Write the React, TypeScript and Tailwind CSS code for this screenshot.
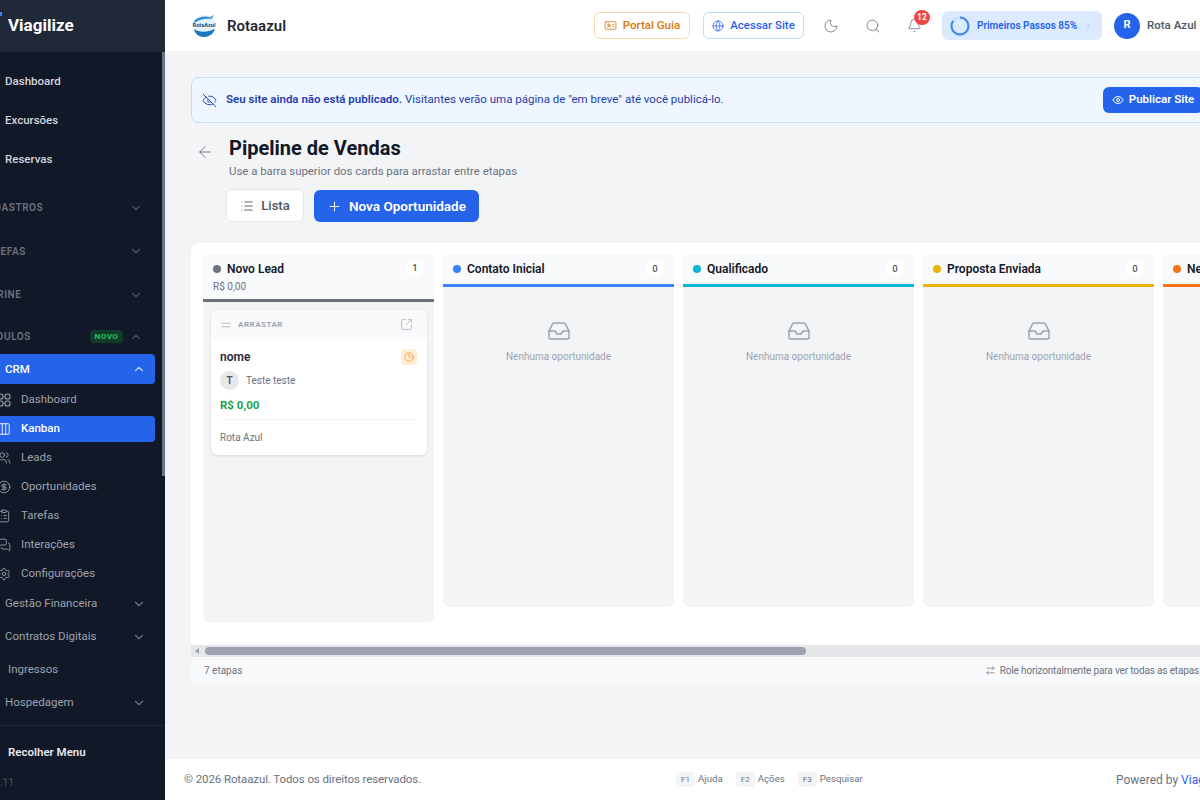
import {
  ArrowLeft,
  ArrowRightLeft,
  Bell,
  ChevronDown,
  ChevronRight,
  ChevronUp,
  Clock,
  Columns3,
  IdCard,
  EyeOff,
  Eye,
  Globe,
  Inbox,
  List,
  MessagesSquare,
  Moon,
  Plus,
  Search,
  Settings,
  SquareArrowOutUpRight,
  CircleDollarSign,
  ClipboardList,
  Users,
  Equal,
} from 'lucide-react';

const font = { fontFamily: 'Roboto, "Noto Sans", sans-serif' };

function GridIcon({ size = 14 }: { size?: number }) {
  return (
    <svg width={size} height={size} viewBox="0 0 14 14" fill="none" stroke="currentColor" strokeWidth="1.1">
      <rect x="1" y="1" width="5" height="5" rx="2" />
      <rect x="8" y="1" width="5" height="5" rx="2" />
      <rect x="1" y="8" width="5" height="5" rx="2" />
      <rect x="8" y="8" width="5" height="5" rx="2" />
    </svg>
  );
}

function TopItem({ label }: { label: string }) {
  return (
    <div className="h-[39px] pt-[1px] flex items-center pl-[40px] text-[11.5px] font-medium text-[#d1d5db]">
      {label}
    </div>
  );
}

function SectionTitle({ label, open, badge, h }: { label: string; open?: boolean; badge?: boolean; h: string }) {
  return (
    <div className={`${h} flex items-center pl-[15px] pr-[22px] text-[10px] font-semibold tracking-[0.6px] text-[#6b7280]`}>
      <span className="flex-1">{label}</span>
      {badge && (
        <span className="mr-[6px] w-[33px] h-[13px] flex items-center justify-center rounded bg-[#14532d]/60 text-[#22c55e] text-[8px] font-bold tracking-[0.5px]">NOVO</span>
      )}
      <span className="text-[#4b5563]">{open ? <ChevronUp size={14} /> : <ChevronDown size={14} />}</span>
    </div>
  );
}

function SubItem({ label, icon: Icon, active }: { label: string; icon: React.ComponentType<{ size?: number; strokeWidth?: number }>; active?: boolean }) {
  return (
    <div className={`h-[29px] flex items-center ${active ? 'text-white' : 'text-[#9ca3af]'} text-[11.5px]`}>
      <div className={`flex items-center w-[190px] h-[26px] rounded pl-[32px] ${active ? 'bg-[#2563eb] font-medium' : ''}`}>
        <Icon size={14} strokeWidth={1.5} />
        <span className="ml-[10px] mt-[1px]">{label}</span>
      </div>
    </div>
  );
}

function GroupItem({ label, chevron = true, indent }: { label: string; chevron?: boolean; indent?: boolean }) {
  return (
    <div className={`h-[33px] flex items-center pr-[19px] text-[11.5px] text-[#9ca3af] ${indent ? 'pl-[43px]' : 'pl-[40px]'}`}>
      <span className="flex-1 mt-[1px]">{label}</span>
      {chevron && <ChevronDown size={14} className="text-[#6b7280]" />}
    </div>
  );
}

function Sidebar() {
  return (
    <aside className="w-[165px] shrink-0 h-full overflow-hidden bg-[#111827] flex flex-col">
      <div className="h-[52px] shrink-0 bg-[#1f2937] flex items-center relative">
        <div className="absolute left-0 top-[12px] w-[2px] h-[4px] bg-[#3b82f6]" />
        <span className="pl-[8px] text-[17px] font-bold text-white">Viagilize</span>
      </div>
      <div className="h-[673px] shrink-0 relative overflow-hidden ml-[-35px] w-[200px]">
        <div className="pt-[10px]">
          <TopItem label="Dashboard" />
          <TopItem label="Excursões" />
          <TopItem label="Reservas" />
          <div className="h-[6px]" />
          <SectionTitle label="CADASTROS" h="h-[43px] pt-[2px]" />
          <SectionTitle label="TAREFAS" h="h-[44px] pt-[2px]" />
          <SectionTitle label="VITRINE" h="h-[43px] pt-[2px]" />
          <SectionTitle label="MÓDULOS" h="h-[39px] pt-[4px]" open badge />
          <div className="h-[30px] w-[190px] rounded bg-[#2563eb] flex items-center pl-[40px] pr-[9px] text-[11.5px] font-medium text-white">
            <span className="flex-1 mt-[1px]">CRM</span>
            <ChevronUp size={14} className="text-white/70" />
          </div>
          <div className="mt-[1px]">
            <SubItem label="Dashboard" icon={GridIcon} />
            <SubItem label="Kanban" icon={Columns3} active />
            <SubItem label="Leads" icon={Users} />
            <SubItem label="Oportunidades" icon={CircleDollarSign} />
            <SubItem label="Tarefas" icon={ClipboardList} />
            <SubItem label="Interações" icon={MessagesSquare} />
            <SubItem label="Configurações" icon={Settings} />
          </div>
          <div className="mt-[-1px]">
            <GroupItem label="Gestão Financeira" />
            <GroupItem label="Contratos Digitais" />
            <GroupItem label="Ingressos" chevron={false} indent />
            <GroupItem label="Hospedagem" />
          </div>
        </div>
        <div className="absolute right-0 top-0 w-[3px] h-[424px] bg-[#6b7280]" />
      </div>
      <div className="flex-1 border-t border-[#1f2937]">
        <div className="h-[54px] flex items-center pl-[8px] text-[11.5px] font-semibold text-[#e5e7eb]">Recolher Menu</div>
        <div className="mt-[-5px] text-[10px] text-[#4b5563]">.11</div>
      </div>
    </aside>
  );
}

function Logo() {
  return (
    <svg width="24" height="24" viewBox="0 0 24 24" className="shrink-0">
      <circle cx="12" cy="12" r="11" fill="#e3f2fd" />
      <path d="M2 7 C7 2 16 1 21 5 C15 4 7 5 2 9 Z" fill="#2d8fd5" />
      <path d="M2 15 C8 19 16 18 23 15 C21 21 16 23 12 23 C7 23 3 20 2 15 Z" fill="#1c78c0" />
      <path d="M18 3 l4 -2 -2 3z" fill="#2d8fd5" />
      <text x="12" y="13" textAnchor="middle" fontSize="5.6" fontWeight="700" fill="#14507f" fontFamily="Roboto, sans-serif">RotaAzul</text>
    </svg>
  );
}

function ProgressRing() {
  return (
    <svg width="20" height="20" viewBox="0 0 20 20" className="shrink-0 -rotate-90">
      <circle cx="10" cy="10" r="8.5" fill="none" stroke="#bfdbfe" strokeWidth="2" />
      <circle cx="10" cy="10" r="8.5" fill="none" stroke="#3b82f6" strokeWidth="2" strokeDasharray="45.4 53.4" />
    </svg>
  );
}

function Header() {
  return (
    <header className="h-[52px] shrink-0 bg-white border-b border-gray-100 flex items-center pl-[27px]">
      <Logo />
      <span className="ml-[11px] mt-[1px] text-[15px] font-semibold text-[#1f2937]">Rotaazul</span>
      <div className="ml-auto flex items-center">
        <button className="w-[96px] h-[27px] flex items-center justify-center gap-[6px] rounded-md border border-[#fed7aa] text-[11.5px] font-medium text-[#d97706]">
          <IdCard size={13} strokeWidth={1.5} />Portal Guia
        </button>
        <button className="ml-[13px] w-[101px] h-[27px] flex items-center justify-center gap-[6px] rounded-md border border-[#bfdbfe] text-[11.5px] font-medium text-[#2563eb]">
          <Globe size={12} strokeWidth={1.5} />Acessar Site
        </button>
        <Moon size={16} strokeWidth={1.25} className="ml-[19px] text-[#6b7280]" />
        <Search size={16} strokeWidth={1.25} className="ml-[26px] text-[#6b7280]" />
        <div className="ml-[26px] relative">
          <Bell size={15} strokeWidth={1.25} className="text-[#6b7280]" />
          <span className="absolute left-[7px] top-[-8px] w-[16px] h-[15px] rounded-full bg-[#ef4444] text-white text-[8.5px] font-bold flex items-center justify-center">12</span>
        </div>
        <div className="ml-[20px] w-[160px] h-[29px] rounded-md bg-[#dbeafe] flex items-center pl-[8px] text-[10px] font-semibold text-[#2563eb]">
          <ProgressRing />
          <span className="ml-[7px]">Primeiros Passos 85%</span>
          <ChevronRight size={10} className="ml-[6px] text-[#93c5fd]" />
        </div>
        <div className="ml-[12px] w-[26px] h-[26px] rounded-full bg-[#2563eb] text-white text-[11px] font-bold flex items-center justify-center">R</div>
        <span className="ml-[7px] text-[11.5px] font-medium text-[#4b5563] w-[88px]">Rota Azul</span>
      </div>
    </header>
  );
}

const stages = [
  { name: 'Contato Inicial', dot: 'bg-[#3b82f6]', line: 'border-[#3b82f6]' },
  { name: 'Qualificado', dot: 'bg-[#06b6d4]', line: 'border-[#06b6d4]' },
  { name: 'Proposta Enviada', dot: 'bg-[#eab308]', line: 'border-[#eab308]' },
  { name: 'Negociação', dot: 'bg-[#f97316]', line: 'border-[#f97316]' },
];

function CountPill({ n }: { n: number }) {
  return (
    <span className="w-[18px] h-[14px] rounded-full bg-white text-[9.5px] font-medium text-[#4b5563] flex items-center justify-center">{n}</span>
  );
}

function EmptyColumn({ name, dot, line }: { name: string; dot: string; line: string }) {
  return (
    <div className="w-[231px] shrink-0 h-[353px] rounded-md bg-[#f3f4f6] overflow-hidden">
      <div className={`h-[33px] bg-[#f9fafb] border-b-[3px] ${line} flex items-center pl-[10px] pr-[10px]`}>
        <span className={`w-[8px] h-[8px] rounded-full ${dot}`} />
        <span className="ml-[6px] flex-1 text-[12px] font-semibold text-[#111827]">{name}</span>
        <CountPill n={0} />
      </div>
      <div className="flex flex-col items-center pt-[32px] text-[#9ca3af]">
        <Inbox size={24} strokeWidth={1.5} />
        <span className="mt-[6px] text-[10px]">Nenhuma oportunidade</span>
      </div>
    </div>
  );
}

function LeadColumn() {
  return (
    <div className="w-[231px] shrink-0 h-[368px] rounded-md bg-[#f3f4f6] overflow-hidden">
      <div className="h-[48px] bg-[#f9fafb] border-b-[3px] border-[#6b7280] pl-[10px] pr-[10px] pt-[6px]">
        <div className="flex items-center h-[17px]">
          <span className="w-[8px] h-[8px] rounded-full bg-[#6b7280]" />
          <span className="ml-[6px] flex-1 text-[12px] font-semibold text-[#111827]">Novo Lead</span>
          <CountPill n={1} />
        </div>
        <div className="text-[10px] text-[#6b7280] mt-[2px]">R$ 0,00</div>
      </div>
      <div className="ml-[8px] mr-[7px] mt-[8px] h-[145px] rounded-md bg-white shadow-sm overflow-hidden">
        <div className="h-[29px] bg-[#f9fafb] flex items-center pl-[8px] pr-[14px] text-[#9ca3af]">
          <Equal size={14} strokeWidth={1.25} />
          <span className="ml-[5px] flex-1 text-[8px] font-bold tracking-[0.5px]">ARRASTAR</span>
          <SquareArrowOutUpRight size={13} strokeWidth={1.25} />
        </div>
        <div className="pl-[9px] pr-[10px]">
          <div className="flex items-center justify-between mt-[9px]">
            <span className="text-[12px] font-semibold text-[#1f2937]">nome</span>
            <span className="w-[16px] h-[16px] rounded bg-[#ffedd5] flex items-center justify-center text-[#fb923c]">
              <Clock size={10} />
            </span>
          </div>
          <div className="flex items-center mt-[5px]">
            <span className="w-[19px] h-[19px] rounded-full bg-[#e5e7eb] text-[10px] font-semibold text-[#4b5563] flex items-center justify-center">T</span>
            <span className="ml-[7px] text-[10px] text-[#6b7280]">Teste teste</span>
          </div>
          <div className="mt-[7px] text-[11.5px] font-bold text-[#16a34a]">R$ 0,00</div>
          <div className="mt-[5px] border-t border-[#f3f4f6] pt-[10px] text-[10px] text-[#6b7280]">Rota Azul</div>
        </div>
      </div>
    </div>
  );
}

function Key({ k, label }: { k: string; label: string }) {
  return (
    <span className="flex items-center gap-[3px]">
      <kbd className="w-[19px] h-[15px] rounded-sm bg-[#f3f4f6] text-[8px] text-[#6b7280] flex items-center justify-center" style={font}>{k}</kbd>
      <span className="text-[9.7px] text-[#6b7280]">{label}</span>
    </span>
  );
}

export default function App() {
  return (
    <div className="w-[1200px] h-[800px] overflow-hidden flex bg-[#f3f4f6]" style={font}>
      <Sidebar />
      <main className="w-[1035px] h-full flex flex-col shrink-0 overflow-hidden">
        <div className="w-[1070px] h-full flex flex-col">
          <Header />
          <div className="flex-1 pl-[26px] pt-[25px]">
            <div className="h-[46px] rounded-lg bg-[#eff6ff] border border-[#bfdbfe] flex items-center pl-[10px] pr-[31px]">
              <EyeOff size={15} strokeWidth={1.5} className="text-[#1e40af]" />
              <p className="ml-[9px] flex-1 text-[11.5px] text-[#1e40af]">
                <span className="font-semibold">Seu site ainda não está publicado.</span> Visitantes verão uma página de "em breve" até você publicá-lo.
              </p>
              <button className="w-[100px] h-[26px] rounded-md bg-[#2563eb] text-white text-[11.5px] font-semibold flex items-center justify-center gap-[5px]">
                <Eye size={12} />Publicar Site
              </button>
            </div>
            <div className="flex mt-[13px]">
              <ArrowLeft size={18} strokeWidth={1.25} className="ml-[5px] mt-[7px] text-[#6b7280]" />
              <div className="ml-[15px]">
                <h1 className="text-[20px] leading-[24px] font-bold text-[#111827]">Pipeline de Vendas</h1>
                <p className="text-[11.4px] leading-[16px] mt-[3px] text-[#6b7280]">Use a barra superior dos cards para arrastar entre etapas</p>
                <div className="flex items-end mt-[10px] ml-[-3px] gap-[10px]">
                  <button className="w-[78px] h-[33px] rounded-md bg-white border border-[#e5e7eb] flex items-center justify-center gap-[7px] text-[13px] font-medium text-[#4b5563]">
                    <List size={14} strokeWidth={1.5} />Lista
                  </button>
                  <button className="w-[165px] h-[32px] rounded-md bg-[#2563eb] flex items-center justify-center gap-[7px] text-[13.5px] font-semibold text-white">
                    <Plus size={15} strokeWidth={1.5} />Nova Oportunidade
                  </button>
                </div>
              </div>
            </div>
            <section className="mt-[21px] h-[440px] rounded-lg bg-white overflow-hidden flex flex-col">
              <div className="h-[402px] flex gap-[9px] pl-[12px] pt-[11px]">
                <LeadColumn />
                {stages.map((s) => (
                  <EmptyColumn key={s.name} {...s} />
                ))}
              </div>
              <div className="h-[12px] bg-[#e5e7eb] flex items-center">
                <span className="ml-[4px] w-0 h-0 border-y-[3px] border-y-transparent border-r-[4px] border-r-[#9ca3af]" />
                <div className="ml-[6px] w-[601px] h-[8px] rounded-full bg-[#9ca3af]" />
              </div>
              <div className="flex-1 bg-[#f9fafb] flex items-center pl-[13px] pr-[36px] pt-[1px] text-[10px] text-[#6b7280]">
                <span className="flex-1">7 etapas</span>
                <ArrowRightLeft size={11} strokeWidth={1.5} className="mr-[4px]" />
                <span className="tracking-[-0.15px]">Role horizontalmente para ver todas as etapas</span>
              </div>
            </section>
          </div>
          <footer className="h-[42px] shrink-0 bg-white border-t border-[#f3f4f6] flex items-center pl-[19px] text-[11.5px] text-[#6b7280]">
            <span className="w-[492px] tracking-[-0.1px]">© 2026 Rotaazul. Todos os direitos reservados.</span>
            <div className="flex gap-[13px]">
              <Key k="F1" label="Ajuda" />
              <Key k="F2" label="Ações" />
              <Key k="F3" label="Pesquisar" />
            </div>
            <span className="ml-auto w-[119px] text-[12px]">Powered by <span className="text-[#2563eb]">Viagilize</span></span>
          </footer>
        </div>
      </main>
    </div>
  );
}
